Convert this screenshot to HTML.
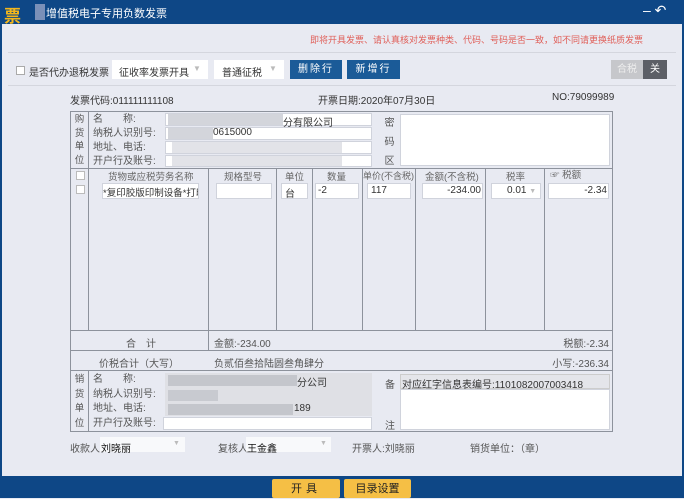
<!DOCTYPE html><html><head><meta charset="utf-8"><style>
*{margin:0;padding:0;box-sizing:border-box}
body{width:684px;height:498px;position:relative;overflow:hidden;background:#e8eaf2;font-family:"Liberation Sans","Noto Sans CJK SC",sans-serif;font-size:10px;color:#333}
.a{position:absolute;white-space:nowrap}
.v{position:absolute;white-space:normal;width:11px;text-align:center}
.in{position:absolute;background:#fff;border:1px solid #d0d3dc}
.l{position:absolute;background:#8d929c}
.r{text-align:right}
</style></head><body>
<div class="a" style="left:0;top:0;width:684px;height:24px;background:#0e4786"></div>
<div class="a" style="left:0;top:24px;width:2px;height:452px;background:#0e4786"></div>
<div class="a" style="left:682px;top:24px;width:2px;height:452px;background:#0e4786"></div>
<div class="a" style="left:4px;top:2px;font-size:17px;font-weight:bold;color:#f2b61c">票</div>
<div class="a" style="left:35px;top:4px;width:10px;height:16px;background:#7a90b8"></div>
<div class="a" style="left:46px;top:5px;font-size:11px;color:#fff">增值税电子专用负数发票</div>
<div class="a" style="left:643px;top:2px;font-size:14px;color:#fff">– ↶</div>
<div class="a r" style="left:300px;top:33px;width:343px;font-size:9px;color:#e0605a">即将开具发票、请认真核对发票种类、代码、号码是否一致，如不同请更换纸质发票</div>
<div class="a" style="left:8px;top:52px;width:668px;height:1px;background:#d4d6de"></div>
<div class="a" style="left:16px;top:66px;width:9px;height:9px;background:#fff;border:1px solid #aaa"></div>
<div class="a" style="left:29px;top:64px">是否代办退税发票</div>
<div class="in" style="left:112px;top:60px;width:96px;height:19px;border:none"></div><div class="a" style="left:119px;top:64px">征收率发票开具</div><div class="a" style="left:193px;top:64px;color:#bbb;font-size:8px">▼</div>
<div class="in" style="left:214px;top:60px;width:70px;height:19px;border:none"></div><div class="a" style="left:222px;top:64px">普通征税</div><div class="a" style="left:269px;top:64px;color:#bbb;font-size:8px">▼</div>
<div class="a" style="left:290px;top:60px;width:52px;height:19px;background:#1b5b98;color:#fff;text-align:center;line-height:19px;letter-spacing:2px">删除行</div>
<div class="a" style="left:347px;top:60px;width:53px;height:19px;background:#1b5b98;color:#fff;text-align:center;line-height:19px;letter-spacing:2px">新增行</div>
<div class="a" style="left:611px;top:60px;width:32px;height:19px;background:#c6c7cb;color:#eee;text-align:center;line-height:19px">合税</div>
<div class="a" style="left:643px;top:60px;width:24px;height:19px;background:#5c5f66;color:#fff;text-align:center;line-height:19px">关</div>
<div class="a" style="left:8px;top:85px;width:668px;height:1px;background:#d4d6de"></div>
<div class="a" style="left:70px;top:92px">发票代码:011111111108</div>
<div class="a" style="left:318px;top:92px">开票日期:2020年07月30日</div>
<div class="a" style="left:552px;top:92px">NO:79099989</div>
<div class="a" style="left:70px;top:111px;width:543px;height:321px;border:1px solid #8d929c"></div>
<div class="l" style="left:88px;top:111px;width:1px;height:219px"></div>
<div class="l" style="left:70px;top:168px;width:543px;height:1px"></div>
<div class="v" style="left:74px;top:113px;font-size:9.5px;line-height:13.5px;color:#555">购货单位</div>
<div class="a" style="left:93px;top:113px;line-height:14px;color:#555">名　　称:<br>纳税人识别号:<br>地址、电话:<br>开户行及账号:</div>
<div class="in" style="left:165px;top:113px;width:207px;height:13px"></div>
<div class="in" style="left:165px;top:127px;width:207px;height:13px"></div>
<div class="in" style="left:165px;top:141px;width:207px;height:13px"></div>
<div class="in" style="left:165px;top:155px;width:207px;height:12px"></div>
<div class="a" style="left:168px;top:114px;width:115px;height:11px;background:#d3d5db"></div>
<div class="a" style="left:168px;top:128px;width:45px;height:11px;background:#d3d5db"></div>
<div class="a" style="left:172px;top:142px;width:170px;height:11px;background:#e2e3e8"></div>
<div class="a" style="left:172px;top:156px;width:170px;height:10px;background:#e2e3e8"></div>
<div class="a" style="left:283px;top:114px">分有限公司</div>
<div class="a" style="left:213px;top:127px">0615000</div>
<div class="v" style="left:384px;top:114px;line-height:19px;color:#555">密码区</div>
<div class="in" style="left:400px;top:114px;width:210px;height:52px"></div>
<div class="l" style="left:208px;top:168px;width:1px;height:182px"></div>
<div class="l" style="left:276px;top:168px;width:1px;height:162px"></div>
<div class="l" style="left:312px;top:168px;width:1px;height:162px"></div>
<div class="l" style="left:362px;top:168px;width:1px;height:162px"></div>
<div class="l" style="left:415px;top:168px;width:1px;height:162px"></div>
<div class="l" style="left:485px;top:168px;width:1px;height:162px"></div>
<div class="l" style="left:544px;top:168px;width:1px;height:162px"></div>
<div class="a" style="left:76px;top:171px;width:9px;height:9px;background:#fff;border:1px solid #bbb"></div>
<div class="a" style="left:76px;top:185px;width:9px;height:9px;background:#fff;border:1px solid #bbb"></div>
<div class="a" style="left:108px;top:169px;color:#666;font-size:9.5px">货物或应税劳务名称</div>
<div class="a" style="left:224px;top:169px;color:#666;font-size:9.5px">规格型号</div>
<div class="a" style="left:285px;top:169px;color:#666;font-size:9.5px">单位</div>
<div class="a" style="left:327px;top:169px;color:#666;font-size:9.5px">数量</div>
<div class="a" style="left:363px;top:169px;color:#666;font-size:9px">单价(不含税)</div>
<div class="a" style="left:425px;top:169px;color:#666;font-size:9.5px">金额(不含税)</div>
<div class="a" style="left:506px;top:169px;color:#666;font-size:9.5px">税率</div>
<div class="a" style="left:550px;top:167px;color:#666;font-size:9.5px">☞ 税额</div>
<div class="in" style="left:102px;top:183px;width:97px;height:16px"></div><div class="a" style="left:103px;top:185px;width:95px;overflow:hidden;font-size:9.5px">*复印胶版印制设备*打印</div>
<div class="in" style="left:216px;top:183px;width:56px;height:16px"></div>
<div class="in" style="left:281px;top:183px;width:27px;height:16px"></div><div class="a" style="left:285px;top:185px">台</div>
<div class="in" style="left:315px;top:183px;width:44px;height:16px"></div><div class="a" style="left:318px;top:185px">-2</div>
<div class="in" style="left:367px;top:183px;width:44px;height:16px"></div><div class="a" style="left:371px;top:185px">117</div>
<div class="in" style="left:422px;top:183px;width:61px;height:16px"></div><div class="a r" style="left:422px;top:185px;width:59px">-234.00</div>
<div class="in" style="left:491px;top:183px;width:50px;height:16px"></div><div class="a" style="left:507px;top:185px">0.01 <span style="color:#bbb;font-size:7px">▼</span></div>
<div class="in" style="left:548px;top:183px;width:61px;height:16px"></div><div class="a r" style="left:548px;top:185px;width:59px">-2.34</div>
<div class="l" style="left:70px;top:330px;width:543px;height:1px"></div>
<div class="l" style="left:70px;top:350px;width:543px;height:1px"></div>
<div class="l" style="left:70px;top:370px;width:543px;height:1px"></div>
<div class="a" style="left:126px;top:335px;color:#555">合　计</div>
<div class="a" style="left:214px;top:335px;color:#555">金额:-234.00</div>
<div class="a r" style="left:500px;top:335px;width:109px;color:#555">税额:-2.34</div>
<div class="a" style="left:99px;top:355px;color:#555">价税合计（大写）</div>
<div class="a" style="left:214px;top:355px;color:#555">负贰佰叁拾陆圆叁角肆分</div>
<div class="a r" style="left:500px;top:355px;width:109px;color:#555">小写:-236.34</div>
<div class="l" style="left:88px;top:370px;width:1px;height:62px"></div>
<div class="v" style="left:74px;top:373px;font-size:9.5px;line-height:14.5px;color:#555">销货单位</div>
<div class="a" style="left:93px;top:373px;line-height:14.5px;color:#555">名　　称:<br>纳税人识别号:<br>地址、电话:<br>开户行及账号:</div>
<div class="a" style="left:165px;top:373px;width:207px;height:43px;background:#dfe0e5"></div>
<div class="a" style="left:168px;top:375px;width:129px;height:11px;background:#c4c6cc"></div>
<div class="a" style="left:168px;top:390px;width:50px;height:11px;background:#c8cad0"></div>
<div class="a" style="left:168px;top:404px;width:125px;height:11px;background:#c4c6cc"></div>
<div class="a" style="left:297px;top:374px">分公司</div>
<div class="a" style="left:294px;top:403px">189</div>
<div class="in" style="left:163px;top:417px;width:209px;height:13px"></div>
<div class="a" style="left:385px;top:376px;color:#555">备</div>
<div class="a" style="left:385px;top:417px;color:#555">注</div>
<div class="a" style="left:400px;top:374px;width:210px;height:15px;background:#e4e5ea;border:1px solid #ccc"></div>
<div class="a" style="left:402px;top:376px">对应红字信息表编号:1101082007003418</div>
<div class="in" style="left:400px;top:389px;width:210px;height:41px"></div>
<div class="a" style="left:70px;top:440px;color:#555">收款人:</div>
<div class="in" style="left:100px;top:437px;width:85px;height:15px;border:none;opacity:.7"></div><div class="a" style="left:101px;top:440px;color:#111">刘晓丽</div><div class="a" style="left:173px;top:440px;color:#bbb;font-size:7px">▼</div>
<div class="a" style="left:218px;top:440px;color:#555">复核人:</div>
<div class="in" style="left:246px;top:437px;width:85px;height:15px;border:none;opacity:.7"></div><div class="a" style="left:247px;top:440px;color:#111">王金鑫</div><div class="a" style="left:320px;top:440px;color:#bbb;font-size:7px">▼</div>
<div class="a" style="left:352px;top:440px;color:#555">开票人:刘晓丽</div>
<div class="a" style="left:470px;top:440px;color:#555">销货单位：（章）</div>
<div class="a" style="left:0;top:476px;width:684px;height:22px;background:#0e4786"></div>
<div class="a" style="left:272px;top:479px;width:68px;height:19px;background:#f5bf45;border-radius:2px;color:#222;text-align:center;line-height:20px;font-size:11px;letter-spacing:4px">开具</div>
<div class="a" style="left:344px;top:479px;width:67px;height:19px;background:#f5bf45;border-radius:2px;color:#222;text-align:center;line-height:20px;font-size:11px">目录设置</div>
</body></html>
